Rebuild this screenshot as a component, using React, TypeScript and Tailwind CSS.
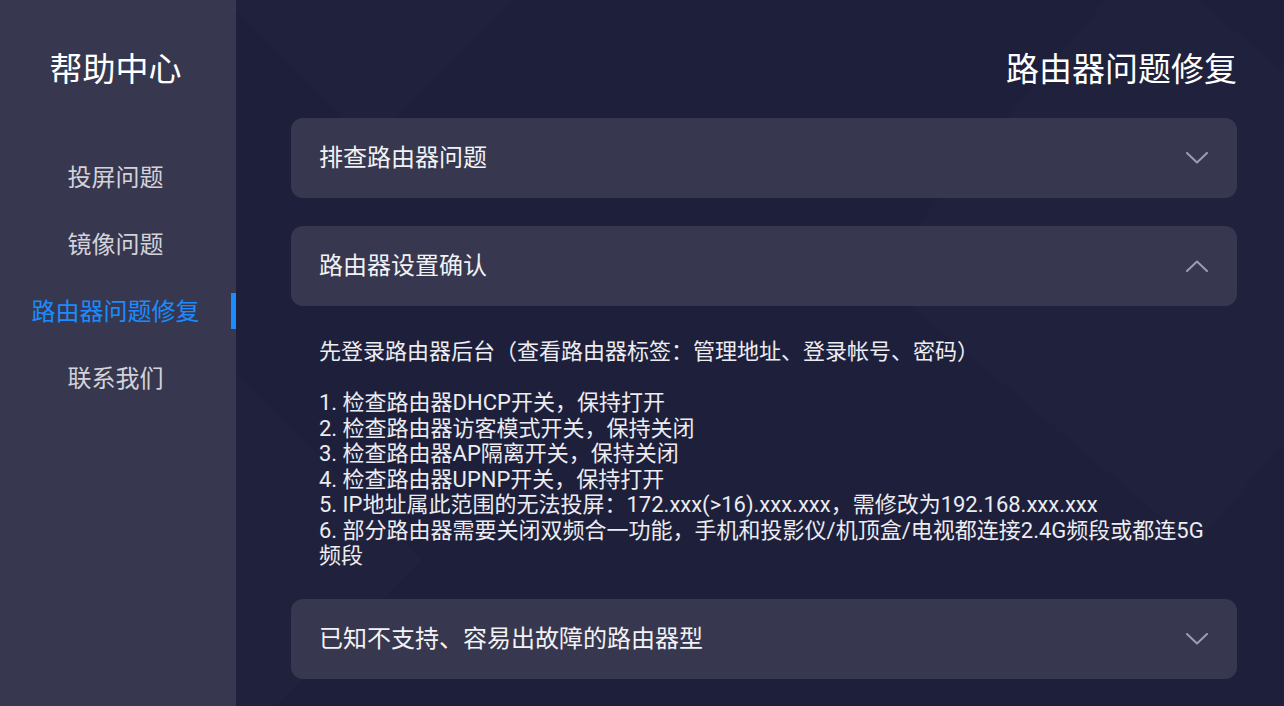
import React from "react";

const navItems = ["投屏问题", "镜像问题", "路由器问题修复", "联系我们"];
const activeNav = 2;

const steps = [
  "1. 检查路由器DHCP开关，保持打开",
  "2. 检查路由器访客模式开关，保持关闭",
  "3. 检查路由器AP隔离开关，保持关闭",
  "4. 检查路由器UPNP开关，保持打开",
  "5. IP地址属此范围的无法投屏：172.xxx(>16).xxx.xxx，需修改为192.168.xxx.xxx",
  "6. 部分路由器需要关闭双频合一功能，手机和投影仪/机顶盒/电视都连接2.4G频段或都连5G频段",
];

const Chevron = ({ up }: { up?: boolean }) => (
  <svg width="22" height="12" viewBox="0 0 22 12" fill="none" className="shrink-0">
    <path
      d={up ? "M1 11 L11 1.5 L21 11" : "M1 1 L11 10.5 L21 1"}
      stroke="#9d9db2"
      strokeWidth="2"
      strokeLinecap="round"
      strokeLinejoin="round"
    />
  </svg>
);

const Card = ({ title, open }: { title: string; open?: boolean }) => (
  <div className="h-[80px] rounded-[12px] bg-[#37384f] pl-[28px] pr-[29px] flex items-center justify-between">
    <span className="text-[24px] leading-[32px] text-[#f2f2f5]">{title}</span>
    <Chevron up={open} />
  </div>
);

export default function App() {
  return (
    <div
      className="relative flex h-[706px] w-[1284px] overflow-hidden bg-[#1e203b]"
      style={{ fontFamily: 'Roboto, "Noto Sans CJK SC", sans-serif' }}
    >
      {/* faint diamond decor */}
      <div className="pointer-events-none absolute inset-0 overflow-hidden">
        <div className="absolute left-[263px] top-[-112px] h-[212px] w-[212px] rotate-45 bg-white/[0.012]" />
        <div className="absolute left-[960px] top-[40px] h-[420px] w-[420px] rotate-[40deg] bg-white/[0.01]" />
        <div className="absolute left-[60px] top-[410px] h-[300px] w-[300px] rotate-45 bg-white/[0.012]" />
      </div>

      <aside className="relative z-10 w-[236px] shrink-0 bg-[#37384f] flex flex-col items-center pr-[5px]">
        <h1 className="mt-[50px] text-[33px] leading-[40px] text-white">帮助中心</h1>
        <nav className="mt-[54px] w-full">
          {navItems.map((item, i) => (
            <div key={item} className="relative h-[67px] flex items-center justify-center">
              <span
                className={
                  i === activeNav
                    ? "text-[24px] leading-[32px] text-[#1a8cff]"
                    : "text-[24px] leading-[32px] text-[#d2d2da]"
                }
              >
                {item}
              </span>
              {i === activeNav && (
                <span className="absolute right-[-5px] top-[15px] h-[36px] w-[5px] bg-[#1a8cff]" />
              )}
            </div>
          ))}
        </nav>
      </aside>

      <main className="relative z-10 flex-1 pl-[55px] pr-[47px]">
        <div className="mt-[50px] mb-[28px] text-right text-[33px] leading-[40px] text-white">
          路由器问题修复
        </div>

        <Card title="排查路由器问题" />
        <div className="mt-[28px]">
          <Card title="路由器设置确认" open />
        </div>

        <div className="px-[28px] pt-[33px] pb-[30px] text-[22px] leading-[25.5px] text-[#ececf1]">
          <p>先登录路由器后台（查看路由器标签：管理地址、登录帐号、密码）</p>
          <p>&nbsp;</p>
          {steps.map((s) => (
            <p key={s}>{s}</p>
          ))}
        </div>

        <Card title="已知不支持、容易出故障的路由器型" />
      </main>
    </div>
  );
}
